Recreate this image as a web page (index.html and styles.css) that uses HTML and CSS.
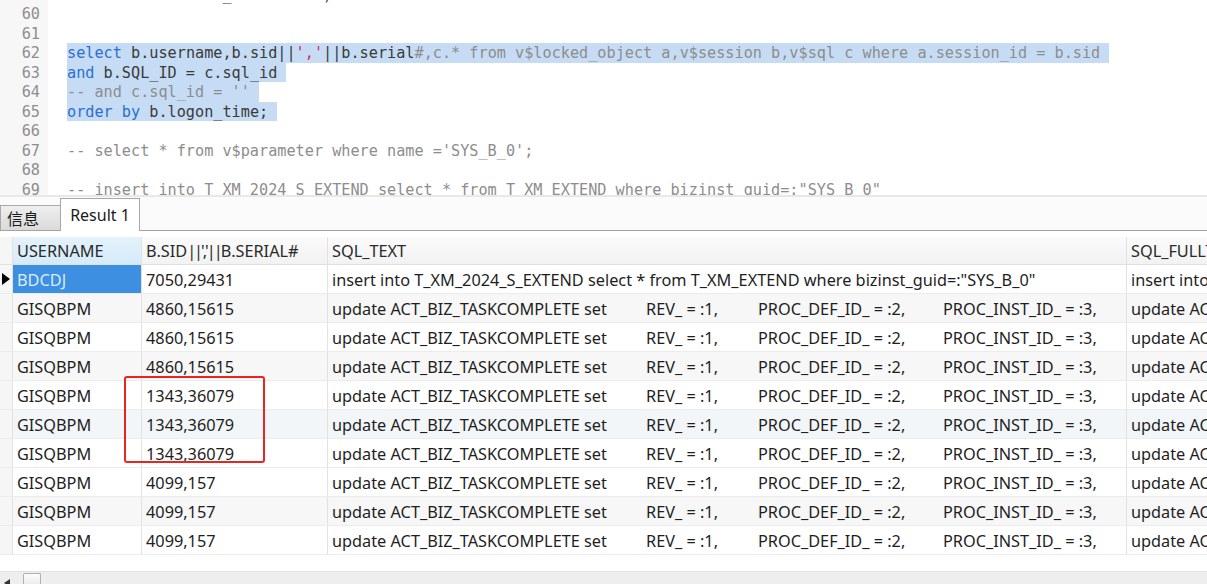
FILE: index.html
```html
<!DOCTYPE html>
<html>
<head>
<meta charset="utf-8">
<link rel="stylesheet" href="styles.css">
</head>
<body>
<div class="app">
  <div class="editor">
    <div class="gutter">
      <div class="lines">
        <div class="ln">59</div><div class="ln">60</div><div class="ln">61</div><div class="ln">62</div><div class="ln">63</div><div class="ln">64</div><div class="ln">65</div><div class="ln">66</div><div class="ln">67</div><div class="ln">68</div><div class="ln">69</div>
      </div>
    </div>
    <div class="code">
      <div class="lines">
        <div class="l"><span class="kw">delete from</span> TABLE_NAME <span class="kw">where</span>)</div>
        <div class="l"> </div>
        <div class="l"> </div>
        <div class="l"><span class="sel"><span class="kw">select</span> b.username,b.sid||<span class="str">','</span>||b.serial<span class="cm">#,c.* from v$locked_object a,v$session b,v$sql c where a.session_id = b.sid</span> </span></div>
        <div class="l"><span class="sel"><span class="kw">and</span> b.SQL_ID = c.sql_id </span></div>
        <div class="l"><span class="sel"><span class="cm">-- and c.sql_id = ''</span> </span></div>
        <div class="l"><span class="sel"><span class="kw">order by</span> b.logon_time; </span></div>
        <div class="l"> </div>
        <div class="l"><span class="cm">-- select * from v$parameter where name ='SYS_B_0';</span></div>
        <div class="l"> </div>
        <div class="l"><span class="cm">-- insert into T_XM_2024_S_EXTEND select * from T_XM_EXTEND where bizinst_guid=:"SYS_B_0"</span></div>
      </div>
    </div>
  </div>
  <div class="sep"></div>
  <div class="tabs">
    <div class="tab tab-info">信息</div>
    <div class="tab tab-result">Result 1</div>
  </div>
  <div class="grid-wrap">
    <div class="grid">
      <div class="row head">
        <div class="c ind"></div>
        <div class="c hsel">USERNAME</div>
        <div class="c">B.SID<span class="pp">||','||</span>B.SERIAL#</div>
        <div class="c">SQL_TEXT</div>
        <div class="c">SQL_FULLTEXT</div>
      </div>
      <div class="row">
        <div class="c ind"><svg class="cur" width="8" height="12" viewBox="0 0 8 12"><polygon points="0,0 8,6 0,12" fill="#000"/></svg></div>
        <div class="c csel">BDCDJ</div>
        <div class="c">7050,29431</div>
        <div class="c">insert into T_XM_2024_S_EXTEND select * from T_XM_EXTEND where bizinst_guid=:"SYS_B_0"</div>
        <div class="c">insert into T_XM_2024_S_EXTEND select * from T_XM_EXTEND</div>
      </div>
      <div class="row alt">
        <div class="c ind"></div><div class="c">GISQBPM</div><div class="c">4860,15615</div>
        <div class="c"><span class="s1">update ACT_BIZ_TASKCOMPLETE set</span><span class="s2">REV_ = :1,</span><span class="s3">PROC_DEF_ID_ = :2,</span><span>PROC_INST_ID_ = :3,</span></div>
        <div class="c">update ACT_BIZ_TASKCOMPLETE set</div>
      </div>
      <div class="row">
        <div class="c ind"></div><div class="c">GISQBPM</div><div class="c">4860,15615</div>
        <div class="c"><span class="s1">update ACT_BIZ_TASKCOMPLETE set</span><span class="s2">REV_ = :1,</span><span class="s3">PROC_DEF_ID_ = :2,</span><span>PROC_INST_ID_ = :3,</span></div>
        <div class="c">update ACT_BIZ_TASKCOMPLETE set</div>
      </div>
      <div class="row alt">
        <div class="c ind"></div><div class="c">GISQBPM</div><div class="c">4860,15615</div>
        <div class="c"><span class="s1">update ACT_BIZ_TASKCOMPLETE set</span><span class="s2">REV_ = :1,</span><span class="s3">PROC_DEF_ID_ = :2,</span><span>PROC_INST_ID_ = :3,</span></div>
        <div class="c">update ACT_BIZ_TASKCOMPLETE set</div>
      </div>
      <div class="row">
        <div class="c ind"></div><div class="c">GISQBPM</div><div class="c">1343,36079</div>
        <div class="c"><span class="s1">update ACT_BIZ_TASKCOMPLETE set</span><span class="s2">REV_ = :1,</span><span class="s3">PROC_DEF_ID_ = :2,</span><span>PROC_INST_ID_ = :3,</span></div>
        <div class="c">update ACT_BIZ_TASKCOMPLETE set</div>
      </div>
      <div class="row alt2">
        <div class="c ind"></div><div class="c">GISQBPM</div><div class="c">1343,36079</div>
        <div class="c"><span class="s1">update ACT_BIZ_TASKCOMPLETE set</span><span class="s2">REV_ = :1,</span><span class="s3">PROC_DEF_ID_ = :2,</span><span>PROC_INST_ID_ = :3,</span></div>
        <div class="c">update ACT_BIZ_TASKCOMPLETE set</div>
      </div>
      <div class="row">
        <div class="c ind"></div><div class="c">GISQBPM</div><div class="c">1343,36079</div>
        <div class="c"><span class="s1">update ACT_BIZ_TASKCOMPLETE set</span><span class="s2">REV_ = :1,</span><span class="s3">PROC_DEF_ID_ = :2,</span><span>PROC_INST_ID_ = :3,</span></div>
        <div class="c">update ACT_BIZ_TASKCOMPLETE set</div>
      </div>
      <div class="row">
        <div class="c ind"></div><div class="c">GISQBPM</div><div class="c">4099,157</div>
        <div class="c"><span class="s1">update ACT_BIZ_TASKCOMPLETE set</span><span class="s2">REV_ = :1,</span><span class="s3">PROC_DEF_ID_ = :2,</span><span>PROC_INST_ID_ = :3,</span></div>
        <div class="c">update ACT_BIZ_TASKCOMPLETE set</div>
      </div>
      <div class="row alt">
        <div class="c ind"></div><div class="c">GISQBPM</div><div class="c">4099,157</div>
        <div class="c"><span class="s1">update ACT_BIZ_TASKCOMPLETE set</span><span class="s2">REV_ = :1,</span><span class="s3">PROC_DEF_ID_ = :2,</span><span>PROC_INST_ID_ = :3,</span></div>
        <div class="c">update ACT_BIZ_TASKCOMPLETE set</div>
      </div>
      <div class="row">
        <div class="c ind"></div><div class="c">GISQBPM</div><div class="c">4099,157</div>
        <div class="c"><span class="s1">update ACT_BIZ_TASKCOMPLETE set</span><span class="s2">REV_ = :1,</span><span class="s3">PROC_DEF_ID_ = :2,</span><span>PROC_INST_ID_ = :3,</span></div>
        <div class="c">update ACT_BIZ_TASKCOMPLETE set</div>
      </div>
    </div>
    <div class="mark"></div>
  </div>
  <div class="hscroll">
    <svg class="arrow" width="6" height="8" viewBox="0 0 6 8"><polygon points="6,0 0,4 6,8" fill="#333"/></svg>
    <div class="thumb"></div>
  </div>
</div>
</body>
</html>
```

FILE: styles.css
```css
html, body {
  margin: 0;
  padding: 0;
}
body {
  width: 1207px;
  height: 584px;
  overflow: hidden;
  background: #fff;
  font-family: "Noto Sans", "Noto Sans CJK SC", sans-serif;
}
.app {
  display: flex;
  flex-direction: column;
  height: 584px;
  width: 1207px;
  overflow: hidden;
}

/* editor */
.editor {
  flex: none;
  height: 195px;
  overflow: hidden;
  display: flex;
  background: #fff;
}
.gutter {
  flex: none;
  width: 48px;
  background: #f7f7f7;
}
.lines {
  margin-top: -15.5px;
}
.ln {
  height: 19.5px;
  line-height: 19.5px;
  padding-top: 1px;
  box-sizing: border-box;
  text-align: right;
  padding-right: 8px;
  color: #8e8e8e;
  font-family: "DejaVu Sans Mono", monospace;
  font-size: 15.2px;
}
.code {
  flex: 1;
  padding-left: 19px;
  font-family: "DejaVu Sans Mono", monospace;
  font-size: 15.2px;
  color: #3a3a3a;
}
.l {
  height: 19.5px;
  line-height: 20.5px;
  white-space: pre;
}
.sel {
  display: inline-block;
  height: 19.5px;
  vertical-align: top;
  background: #c6dcf4;
}
.kw { color: #2a6fd2; }
.str { color: #e0245e; }
.cm { color: #8d8d8d; }

.sep {
  flex: none;
  height: 2px;
  background: #e8e8e8;
}

/* tabs */
.tabs {
  flex: none;
  height: 34px;
  box-sizing: border-box;
  border-bottom: 1px solid #a3a3a3;
  display: flex;
  align-items: flex-end;
  background: #fbfbfb;
}
.tab {
  box-sizing: border-box;
  border: 1px solid #a8a8a8;
  border-bottom: none;
  font-size: 16px;
  color: #1a1a1a;
  display: flex;
  align-items: center;
}
.tab-info {
  width: 61px;
  height: 25px;
  padding-left: 6px;
  background: linear-gradient(#efefef, #dadada);
  font-family: "Noto Sans CJK SC", sans-serif;
}
.tab-result {
  width: 80px;
  height: 33px;
  margin-bottom: -1px;
  margin-left: -1px;
  justify-content: center;
  background: #fff;
}

/* grid */
.grid-wrap {
  flex: 1;
  position: relative;
  padding-top: 6px;
  background: #fff;
  overflow: hidden;
}
.row {
  display: grid;
  grid-template-columns: 13px 129px 186px 799px 300px;
  height: 29px;
  box-sizing: border-box;
  border-bottom: 1px solid #ececec;
  font-size: 16.3px;
  color: #1e1e1e;
}
.row.head {
  height: 28px;
  border-bottom: 1px solid #e0e0e0;
  background: linear-gradient(#fbfbfb, #f2f2f2);
  color: #2a2a2a;
}
.row.alt { background: #f7f7f7; }
.row.alt2 { background: #f3f6f9; }
.c {
  box-sizing: border-box;
  border-right: 1px solid #e2e2e2;
  padding-left: 4px;
  padding-top: 1px;
  white-space: nowrap;
  overflow: hidden;
  display: flex;
  align-items: center;
}
.c.ind {
  padding-left: 2px;
  padding-top: 0;
  background: #f6f6f6;
}
.pp {
  letter-spacing: -2px;
}
.hsel {
  background: linear-gradient(#e4f2fc, #d5ebf9);
}
.csel {
  background: #3c8fe1;
  color: #dcebfb;
}
.s1 { display: inline-block; width: 314px; flex: none; }
.s2 { display: inline-block; width: 112px; flex: none; }
.s3 { display: inline-block; width: 185px; flex: none; }

.mark {
  position: absolute;
  left: 124px;
  top: 145px;
  width: 141px;
  height: 87px;
  box-sizing: border-box;
  border: 2px solid #e8251f;
  border-radius: 3px;
}

/* bottom scrollbar */
.hscroll {
  flex: none;
  height: 13px;
  background: #eeeeee;
  border-top: 1px solid #e2e2e2;
  box-sizing: border-box;
  display: flex;
  align-items: flex-end;
  gap: 13px;
  padding-left: 4px;
}
.arrow {
  margin-bottom: -3px;
}
.thumb {
  width: 18px;
  height: 11px;
  box-sizing: border-box;
  border: 1px solid #b0b0b0;
  border-bottom: none;
  border-radius: 2px 2px 0 0;
  background: linear-gradient(#fdfdfd, #ececec);
}
```
